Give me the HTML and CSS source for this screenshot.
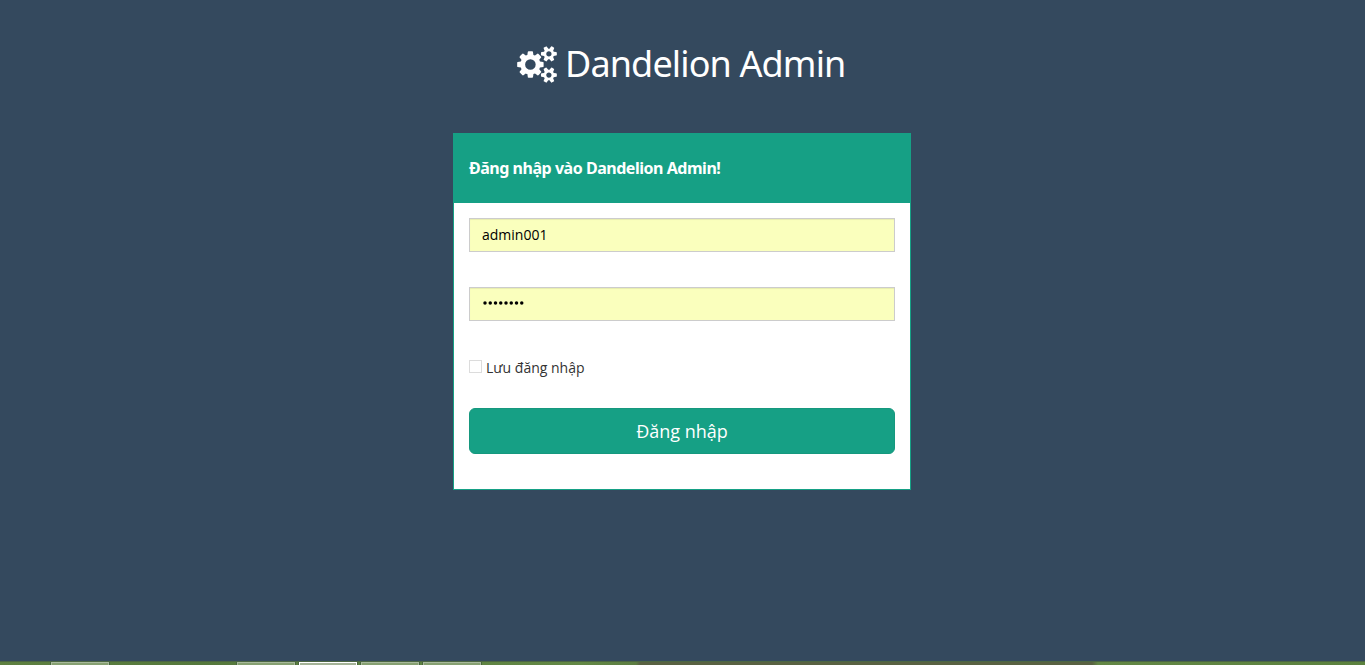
FILE: index.html
```html
<!DOCTYPE html>
<html lang="vi">
<head>
<meta charset="utf-8">
<title>Dandelion Admin</title>
<link rel="stylesheet" href="styles.css">
</head>
<body>
<main class="page">
  <h1 class="brand">
    <svg class="brand-icon" viewBox="0 0 1920 1792" aria-hidden="true"><path fill="currentColor" d="M896 896q0-106-75-181t-181-75-181 75-75 181 75 181 181 75 181-75 75-181zm768 512q0-52-38-90t-90-38-90 38-38 90q0 53 37.500 90.500t90.500 37.500 90.500-37.500 37.500-90.500zm0-1024q0-52-38-90t-90-38-90 38-38 90q0 53 37.500 90.500t90.500 37.500 90.500-37.500 37.500-90.500zm-384 421v185q0 10-7 19.500t-16 10.500l-155 24q-11 35-32 76 34 48 90 115 7 11 7 20 0 12-7 19-23 30-82.500 89.500t-78.500 59.500q-11 0-21-7l-115-90q-37 19-77 31-11 108-23 155-7 24-30 24h-186q-11 0-20-7.500t-10-17.500l-23-153q-34-10-75-31l-118 89q-7 7-20 7-11 0-21-8-144-133-144-160 0-9 7-19 10-14 41-53t47-61q-23-44-35-82l-152-24q-10-1-17-9.500t-7-19.500v-185q0-10 7-19.500t16-10.500l155-24q11-35 32-76-34-48-90-115-7-11-7-20 0-12 7-20 22-30 82-89t79-59q11 0 21 7l115 90q34-18 77-32 11-108 23-154 7-24 30-24h186q11 0 20 7.500t10 17.500l23 153q34 10 75 31l118-89q8-7 20-7 11 0 21 8 144 133 144 160 0 8-7 19-12 16-42 54t-45 60q23 48 34 82l152 23q10 2 17 10.500t7 19.500zm640 533v140q0 16-149 31-12 27-30 52 51 113 51 138 0 4-4 7-122 71-124 71-8 0-46-47t-52-68q-20 2-30 2t-30-2q-14 21-52 68t-46 47q-2 0-124-71-4-3-4-7 0-25 51-138-18-25-30-52-149-15-149-31v-140q0-16 149-31 13-29 30-52-51-113-51-138 0-4 4-7 4-2 35-20t59-34 30-16q8 0 46 46.500t52 67.500q20-2 30-2t30 2q51-71 92-112l6-2q4 0 124 70 4 3 4 7 0 25-51 138 17 23 30 52 149 15 149 31zm0-1024v140q0 16-149 31-12 27-30 52 51 113 51 138 0 4-4 7-122 71-124 71-8 0-46-47t-52-68q-20 2-30 2t-30-2q-14 21-52 68t-46 47q-2 0-124-71-4-3-4-7 0-25 51-138-18-25-30-52-149-15-149-31v-140q0-16 149-31 13-29 30-52-51-113-51-138 0-4 4-7 4-2 35-20t59-34 30-16q8 0 46 46.500t52 67.500q20-2 30-2t30 2q51-71 92-112l6-2q4 0 124 70 4 3 4 7 0 25-51 138 17 23 30 52 149 15 149 31z"/></svg>
    <span class="brand-name">Dandelion Admin</span>
  </h1>
  <section class="panel">
    <header class="panel-head"><h2 class="panel-title">Đăng nhập vào Dandelion Admin!</h2></header>
    <form class="form">
      <input class="field" type="text" value="admin001" aria-label="Tên đăng nhập">
      <div class="field field-password" aria-label="Mật khẩu">
        <svg class="dots" viewBox="0 0 42 4" aria-hidden="true"><circle cx="2" cy="2" r="1.750"/><circle cx="7.250" cy="2" r="1.750"/><circle cx="12.500" cy="2" r="1.750"/><circle cx="17.750" cy="2" r="1.750"/><circle cx="23" cy="2" r="1.750"/><circle cx="28.250" cy="2" r="1.750"/><circle cx="33.500" cy="2" r="1.750"/><circle cx="38.750" cy="2" r="1.750"/></svg>
      </div>
      <label class="remember"><input class="check" type="checkbox"><span>Lưu đăng nhập</span></label>
      <button class="submit" type="button">Đăng nhập</button>
    </form>
  </section>
</main>
<footer class="taskbar">
  <span class="task"></span>
  <span class="task task-group"></span>
  <span class="task task-active"></span>
  <span class="task"></span>
  <span class="task"></span>
</footer>
</body>
</html>
```
FILE: styles.css
```css
* { box-sizing: border-box; }
body {
  margin: 0;
  height: 665px;
  display: flex;
  flex-direction: column;
  overflow: hidden;
  background: #34495e;
  color: #333;
  font: 14px/20px "Open Sans", "Noto Sans", sans-serif;
}
.page { flex: 1; }
.brand {
  display: flex;
  align-items: center;
  gap: 8px;
  width: 458px;
  height: 40px;
  margin: 44px 0 49px 453px;
  padding-left: 64px;
  color: #fff;
  font: 400 36px/40px "Noto Sans", sans-serif;
}
.brand-icon { width: 40px; height: 37px; flex: none; }
.brand-name { white-space: nowrap; letter-spacing: -0.87px; }
.panel {
  width: 458px;
  height: 357px;
  margin-left: 453px;
  background: #fff;
  border: 1px solid #16a085;
}
.panel-head {
  display: flex;
  align-items: center;
  height: 69px;
  padding: 0 15px 2px;
  background: #16a085;
}
.panel-title {
  margin: 0;
  color: #fff;
  font: 700 16px/20px "Noto Sans", sans-serif;
  letter-spacing: -0.47px;
  white-space: nowrap;
}
.form { display: flex; flex-direction: column; padding: 15px; }
.field {
  width: 100%;
  height: 34px;
  margin: 0 0 35px;
  padding: 5px 12px 7px;
  border: 1px solid #ccc;
  border-radius: 0;
  background: #faffbd;
  box-shadow: inset 0 1px 1px rgba(0, 0, 0, .075);
  color: #000;
  font: 14px/20px "Open Sans", sans-serif;
}
.field-password { display: flex; align-items: center; padding-left: 13px; }
.dots { width: 42px; height: 4px; }
.remember { display: flex; align-items: center; gap: 4px; height: 20px; margin: 2px 0 30px; }
.check {
  appearance: none;
  width: 13px;
  height: 13px;
  margin: 0 0 3px;
  border: 1px solid #dcdcdc;
  background: #fff;
}
.submit {
  height: 46px;
  padding: 0;
  border: 1px solid #16987e;
  border-radius: 6px;
  background: #16a085;
  color: #fff;
  font: 18px/24px "Open Sans", sans-serif;
}
.taskbar {
  display: flex;
  gap: 2px;
  height: 4px;
  padding: 1px 0 0 50px;
  background: linear-gradient(#4b6644 1px, transparent 1px), linear-gradient(90deg, #5e8040 0, #55783c 200px, #638845 580px, #5c7d42 636px, #596142 640px, #596142 1092px, #638745 1098px, #5b813e 1365px);
}
.task {
  width: 60px;
  border: 1px solid #48663c;
  border-width: 0 1px;
  background: #86a071;
  box-shadow: inset 0 1px #a8b99b, inset 1px 0 #a8b99b, inset -1px 0 #a8b99b;
}
.task-group { margin-left: 124px; }
.task-active { background: #a4b397; box-shadow: inset 0 1px #fff, inset 1px 0 #fff, inset -1px 0 #fff; }
```
